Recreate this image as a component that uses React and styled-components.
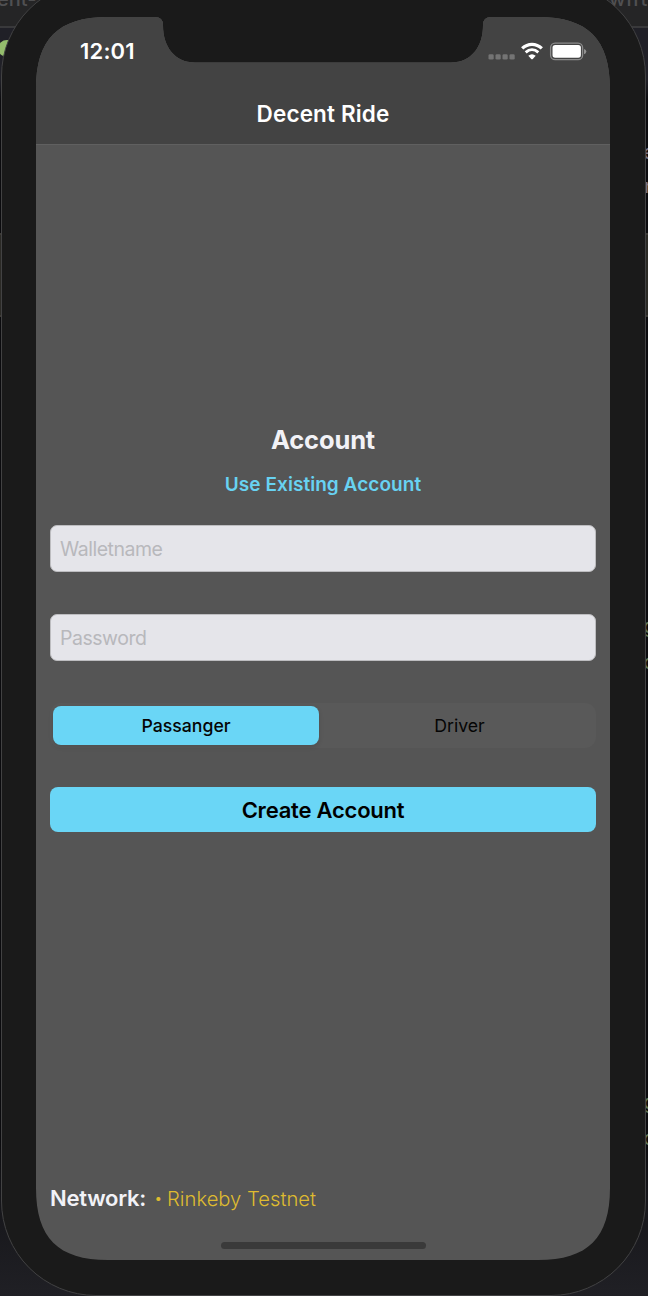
import React, { useState } from "react";
import styled, { createGlobalStyle } from "styled-components";

const GlobalStyle = createGlobalStyle`
  * { box-sizing: border-box; }
  body { margin: 0; background: #1d1d22; font-family: Inter, "Liberation Sans", sans-serif; }
`;

const Desktop = styled.div`
  position: relative;
  width: 648px;
  height: 1296px;
  overflow: hidden;
  background: linear-gradient(
    #252526 0 26px, #39393b 26px 28px, #202027 28px 80px, #0b0b0e 100px 233px,
    #3c3a36 233px 235px, #2b2a26 235px 315px, #3c3a36 315px 317px,
    #0b0b0e 317px 1140px, #151519 1190px, #202025 1296px
  );
`;

const BackdropText = styled.span`
  position: absolute;
  top: ${(p) => p.$top}px;
  left: ${(p) => p.$left}px;
  font: 500 20px/24px Inter, sans-serif;
  letter-spacing: ${(p) => p.$track || 0}px;
  color: ${(p) => p.$color || "#505052"};
  white-space: nowrap;
`;

const BackdropDot = styled.span`
  position: absolute;
  top: 40px;
  left: -2px;
  width: 18px;
  height: 17px;
  border-radius: 50%;
  background: #94bd6c;
`;

const Phone = styled.main`
  position: relative;
  width: 645px;
  height: 1315px;
  margin: -19px 0 0 1px;
  padding: 35px 34px;
  border: 1px solid #424243;
  border-radius: 95px;
  background: #1a1a1a;
`;

const SCREEN_SHAPE =
  "M0 72 C0 22 22 0 72 0 H119 Q127 0 127 8 C127 30 139 45.5 159 45.5 H415 C435 45.5 447 30 447 8 Q447 0 455 0 H502 C552 0 574 22 574 72 V1171 C574 1221 552 1243 502 1243 H72 C22 1243 0 1221 0 1171 Z";

const Screen = styled.div`
  display: flex;
  flex-direction: column;
  width: 574px;
  height: 1243px;
  background: #555;
  clip-path: path("${SCREEN_SHAPE}");
`;

const TopBar = styled.header`
  height: 128px;
  flex: none;
  background: #434343;
  border-bottom: 1px solid #606060;
`;

const StatusBar = styled.div`
  display: flex;
  align-items: center;
  justify-content: space-between;
  height: 68px;
  padding: 0 23px 0 44px;
`;

const Clock = styled.time`
  color: #fff;
  font-size: 22px;
  font-weight: 600;
  letter-spacing: 0.2px;
`;

const Title = styled.h1`
  margin: 15px 0 0;
  text-align: center;
  color: #fff;
  font-size: 22.5px;
  line-height: 28px;
  font-weight: 600;
  letter-spacing: 0.15px;
`;

const Form = styled.form`
  display: flex;
  flex-direction: column;
  padding: 279px 14px 0;
`;

const Heading = styled.h2`
  margin: 0;
  text-align: center;
  font-size: 25.5px;
  line-height: 32px;
  font-weight: 700;
  letter-spacing: -0.15px;
  color: #f2f2f7;
`;

const LinkButton = styled.button`
  align-self: center;
  margin: 16px 0 0;
  padding: 0;
  border: 0;
  background: none;
  color: #68d2f2;
  font: 600 19px/26px Inter, sans-serif;
  letter-spacing: 0.05px;
`;

const Field = styled.input`
  width: 100%;
  height: 47px;
  margin-top: ${(p) => p.$gap}px;
  padding: 0 9px;
  border: 1px solid #bdbdc0;
  border-radius: 7px;
  outline: 0;
  background: #e5e5ea;
  color: #111;
  font: 400 19.5px Inter, sans-serif;
  letter-spacing: -0.48px;
  &::placeholder { color: #b8b8bc; opacity: 1; }
`;

const Segments = styled.div`
  display: grid;
  grid-template-columns: 266px 1fr;
  height: 45px;
  margin-top: 42px;
  padding: 3px;
  border-radius: 11px;
  background: #595959;
`;

const Segment = styled.button`
  padding: 0 0 1px ${(p) => (p.$active ? 0 : 7)}px;
  border: 0;
  border-radius: 8px;
  background: ${(p) => (p.$active ? "#6ad6f6" : "transparent")};
  box-shadow: ${(p) => (p.$active ? "0 2px 5px rgba(0,0,0,.12)" : "none")};
  color: #050505;
  font: ${(p) => (p.$active ? 500 : 400)} 17.7px Inter, sans-serif;
`;

const Submit = styled.button`
  height: 45px;
  margin-top: 39px;
  padding: 0;
  border: 0;
  border-radius: 8px;
  background: #6ad6f6;
  color: #000;
  font: 600 22px Inter, sans-serif;
  letter-spacing: -0.22px;
`;

const Footer = styled.footer`
  display: flex;
  align-items: baseline;
  margin-top: auto;
  padding: 0 14px 29px;
  line-height: 28px;
`;

const NetworkLabel = styled.span`
  font-size: 22px;
  font-weight: 600;
  letter-spacing: -0.25px;
  color: #f2f2f7;
`;

const NetworkName = styled.span`
  margin-left: 5px;
  font-size: 20.2px;
  font-weight: 300;
  color: #dfbb30;
`;

const Bullet = styled.span`
  display: inline-block;
  width: 16px;
  padding-left: 4px;
  font-size: 13px;
  line-height: 1;
  font-weight: 600;
  vertical-align: 3px;
`;

const HomeIndicator = styled.div`
  flex: none;
  align-self: center;
  width: 205px;
  height: 7px;
  margin-bottom: 11px;
  border-radius: 4px;
  background: #3a3a3a;
`;

function StatusIcons() {
  return (
    <svg width="99" height="20" viewBox="0 0 99 20" fill="none">
      <g fill="#747474">
        <rect x="0.5" y="13.3" width="5.2" height="5.2" rx="1.3" />
        <rect x="7.5" y="13.3" width="5.2" height="5.2" rx="1.3" />
        <rect x="14.5" y="13.3" width="5.2" height="5.2" rx="1.3" />
        <rect x="21.5" y="13.3" width="5.2" height="5.2" rx="1.3" />
      </g>
      <path d="M34.2 7.4C40 1.9 48 1.9 53.8 7.4" stroke="#fff" strokeWidth="3.3" />
      <path d="M37.7 11.3C41.5 7.9 46.5 7.9 50.3 11.3" stroke="#fff" strokeWidth="2.9" />
      <path d="M40.3 14.8Q44 11.8 47.7 14.8L44.8 18Q44 18.7 43.2 18Z" fill="#fff" />
      <rect x="62.6" y="2.2" width="32" height="16.5" rx="4.5" stroke="#8b8b8b" strokeWidth="1.3" />
      <rect x="64.5" y="4.1" width="28.4" height="12.7" rx="2.7" fill="#fff" />
      <path d="M96 7.9Q98.3 8.6 98.3 10.6Q98.3 12.6 96 13.2Z" fill="#929292" />
    </svg>
  );
}

export default function App() {
  const [role, setRole] = useState("Passanger");
  return (
    <>
      <GlobalStyle />
      <Desktop>
        <BackdropText $top={-13} $left={-3}>ent-</BackdropText>
        <BackdropText $top={-13} $left={609} $track={1}>wift</BackdropText>
        <BackdropDot />
        <BackdropText $top={140} $left={643} $color="#77717f">e</BackdropText>
        <BackdropText $top={174} $left={644} $color="#77717f">n</BackdropText>
        <BackdropText $top={614} $left={643} $color="#5f7350">g</BackdropText>
        <BackdropText $top={650} $left={643} $color="#5f7350">c</BackdropText>
        <BackdropText $top={1090} $left={643} $color="#5f7350">g</BackdropText>
        <BackdropText $top={1126} $left={643} $color="#5f7350">c</BackdropText>
        <Phone>
          <Screen>
            <TopBar>
              <StatusBar>
                <Clock>12:01</Clock>
                <StatusIcons />
              </StatusBar>
              <Title>Decent Ride</Title>
            </TopBar>
            <Form onSubmit={(e) => e.preventDefault()}>
              <Heading>Account</Heading>
              <LinkButton type="button">Use Existing Account</LinkButton>
              <Field $gap={27} placeholder="Walletname" />
              <Field $gap={42} type="password" placeholder="Password" />
              <Segments>
                {["Passanger", "Driver"].map((name) => (
                  <Segment key={name} type="button" $active={role === name} onClick={() => setRole(name)}>
                    {name}
                  </Segment>
                ))}
              </Segments>
              <Submit>Create Account</Submit>
            </Form>
            <Footer>
              <NetworkLabel>Network:</NetworkLabel>
              <NetworkName><Bullet>•</Bullet>Rinkeby Testnet</NetworkName>
            </Footer>
            <HomeIndicator />
          </Screen>
        </Phone>
      </Desktop>
    </>
  );
}
